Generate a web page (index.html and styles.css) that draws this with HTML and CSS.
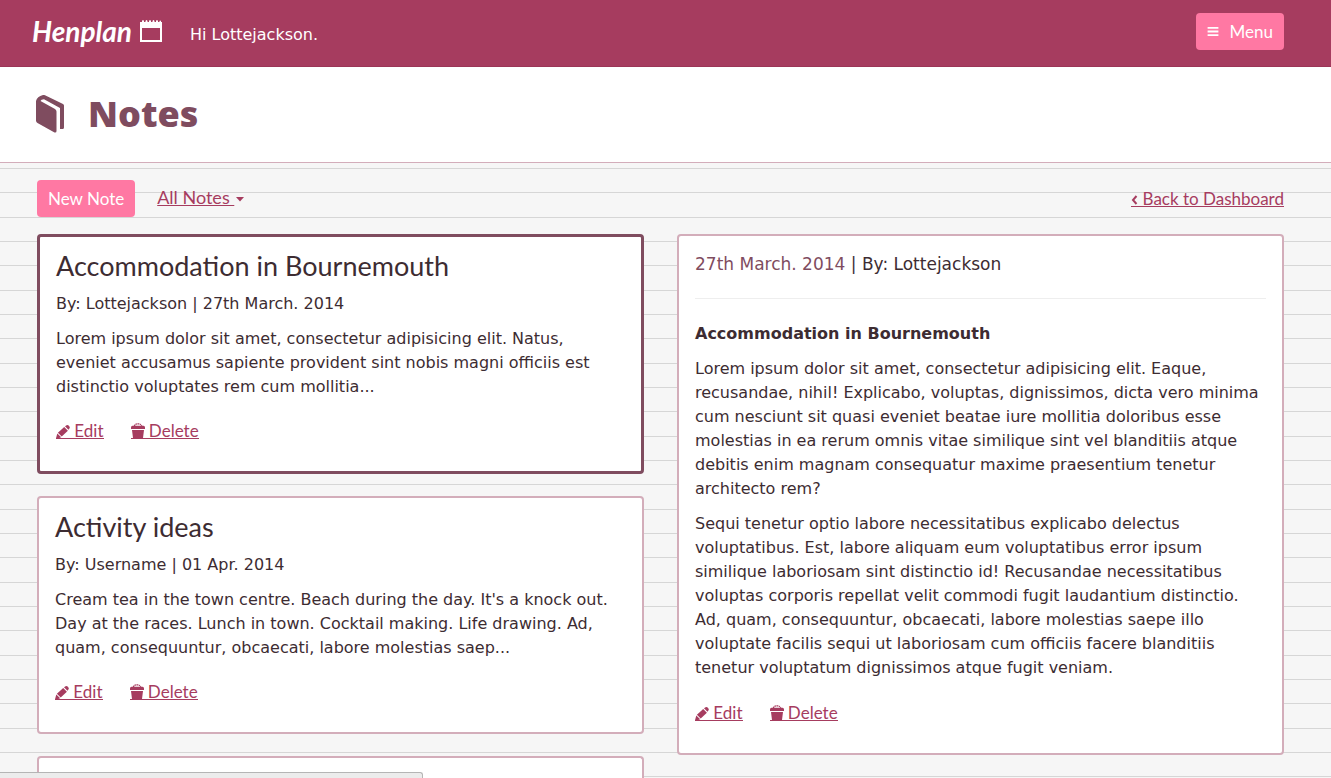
FILE: index.html
```html
<!DOCTYPE html>
<html lang="en">
<head>
<meta charset="utf-8">
<title>Henplan – Notes</title>
<link rel="stylesheet" href="styles.css">
</head>
<body>
<svg class="sprite" aria-hidden="true">
  <symbol id="pencil" viewBox="0 0 14 14"><path d="M9 1.300 10.600.2Q11.800-.3 12.900.8q1.200 1.300.8 2.300l-1.200 1.600zM8.200 2l3.700 3.800-6.200 5.700L1.900 7.700zM1.300 8.500l3.900 3.700L.6 13.900Q-.2 14 0 13.200z"/></symbol>
  <symbol id="bin" viewBox="0 0 14 16"><path d="M3.300 3.200Q4 .8 7 .8t3.700 2.400" fill="none" stroke="currentColor" stroke-width="1.200" stroke-dasharray="1.600 .5"/><path d="M1.500 2.800h11Q14 3 14 4.500V6H0V4.500Q0 3 1.500 2.800zM1 7h12l-1 8q-.1 1-1 1H3q-.9 0-1-1z"/></symbol>
</svg>
<header class="topbar">
  <div class="brand">
    <a class="logo" href="#">Henplan
      <svg class="calendar" viewBox="0 0 22 22" aria-hidden="true"><path fill-rule="evenodd" d="M0 2h2V1q1-2 2 0v1h1.500V1q1-2 2 0v1H9V1q1-2 2 0v1h1.500V1q1-2 2 0v1H16V1q1-2 2 0v1h1.500V1q.8-1 1.500 0v1h1v20H0zM2 8v12h18V8z"/></svg>
    </a>
    <p class="greeting">Hi Lottejackson.</p>
  </div>
  <button class="btn menu" type="button"><svg class="bars" viewBox="0 0 12 10" aria-hidden="true"><path d="M0 0h12v2H0zM0 4h12v2H0zM0 8h12v2H0z"/></svg>Menu</button>
</header>
<div class="title-band">
  <svg class="book" viewBox="0 0 28 38" aria-hidden="true"><path d="M0 6Q1 1.500 7 0q1-.2 2 .3L27 9q1 .5 1 1.500v22q0 1.500-1.500 1.500H24V13L8 4.300Q5 4.500 4.500 6L19 14q1.500 1 1.500 2.500V36q0 2-2 1.500L1.500 28Q0 27 0 25.500z"/></svg>
  <h1>Notes</h1>
</div>
<main class="page">
  <div class="toolbar">
    <button class="btn" type="button">New Note</button>
    <a class="filter" href="#"><span class="filter-label">All Notes&nbsp;</span><svg class="caret" viewBox="0 0 8 5" aria-hidden="true"><path d="M0 0h8L4 4.500z"/></svg></a>
    <a class="back" href="#"><svg class="chevron" viewBox="0 0 7 10" aria-hidden="true"><path d="M5.500 1 2 5l3.500 4" fill="none" stroke="currentColor" stroke-width="2"/></svg> Back to Dashboard</a>
  </div>
  <div class="columns">
    <div class="list">
      <article class="card selected">
        <h2>Accommodation in Bournemouth</h2>
        <p class="meta">By: Lottejackson | 27th March. 2014</p>
        <p>Lorem ipsum dolor sit amet, consectetur adipisicing elit. Natus, eveniet accusamus sapiente provident sint nobis magni officiis est distinctio voluptates rem cum mollitia...</p>
        <div class="actions"><a href="#"><svg class="pencil"><use href="#pencil"/></svg> Edit</a><a href="#"><svg class="bin"><use href="#bin"/></svg> Delete</a></div>
      </article>
      <article class="card">
        <h2>Activity ideas</h2>
        <p class="meta">By: Username | 01 Apr. 2014</p>
        <p>Cream tea in the town centre. Beach during the day. It's a knock out. Day at the races. Lunch in town. Cocktail making. Life drawing. Ad, quam, consequuntur, obcaecati, labore molestias saep...</p>
        <div class="actions"><a href="#"><svg class="pencil"><use href="#pencil"/></svg> Edit</a><a href="#"><svg class="bin"><use href="#bin"/></svg> Delete</a></div>
      </article>
      <article class="card next"></article>
    </div>
    <article class="card detail">
      <p class="detail-meta"><span class="date">27th March. 2014</span> | By: Lottejackson</p>
      <h3>Accommodation in Bournemouth</h3>
      <p>Lorem ipsum dolor sit amet, consectetur adipisicing elit. Eaque, recusandae, nihil! Explicabo, voluptas, dignissimos, dicta vero minima cum nesciunt sit quasi eveniet beatae iure mollitia doloribus esse molestias in ea rerum omnis vitae similique sint vel blanditiis atque debitis enim magnam consequatur maxime praesentium tenetur architecto rem?</p>
      <p>Sequi tenetur optio labore necessitatibus explicabo delectus voluptatibus. Est, labore aliquam eum voluptatibus error ipsum similique laboriosam sint distinctio id! Recusandae necessitatibus voluptas corporis repellat velit commodi fugit laudantium distinctio. Ad, quam, consequuntur, obcaecati, labore molestias saepe illo voluptate facilis sequi ut laboriosam cum officiis facere blanditiis tenetur voluptatum dignissimos atque fugit veniam.</p>
      <div class="actions"><a href="#"><svg class="pencil"><use href="#pencil"/></svg> Edit</a><a href="#"><svg class="bin"><use href="#bin"/></svg> Delete</a></div>
    </article>
  </div>
</main>
<div class="status"></div>
</body>
</html>
```
FILE: styles.css
```css
* { box-sizing: border-box; }
html, body { height: 100%; }
body {
  margin: 0;
  display: flex;
  flex-direction: column;
  background: #f6f6f6;
  color: #3d2c32;
  font: 16px/24px "DejaVu Sans", Verdana, sans-serif;
}
h1, h2, h3, p { margin: 0; }
svg { fill: currentColor; }
a { color: #a63c5f; }
.sprite { position: absolute; width: 0; height: 0; }

.topbar {
  flex: none;
  display: flex;
  justify-content: space-between;
  align-items: flex-start;
  height: 67px;
  padding: 13px 47px 0 32px;
  background: #a63c5f;
  border-bottom: 1px solid #9b3557;
  color: #fff;
}
.brand { display: flex; align-items: center; gap: 28px; }
.logo {
  display: flex;
  align-items: center;
  gap: 8px;
  color: #fff;
  font: italic 700 28px/36px Lato, sans-serif;
  text-decoration: none;
}
.calendar { width: 22px; height: 22px; }
.greeting { padding-top: 8px; }

.btn {
  height: 37px;
  padding: 0 11px;
  border: 0;
  border-radius: 4px;
  background: #ff78a3;
  color: #fff;
  font: 17px/24px Lato, sans-serif;
}
.menu { display: flex; align-items: center; gap: 11px; }
.bars { width: 12px; height: 9px; }

.title-band {
  flex: none;
  display: flex;
  align-items: center;
  gap: 24px;
  height: 96px;
  padding: 0 37px 2px 36px;
  background: #fff;
  border-bottom: 1px solid #d3adba;
  color: #7f4c5f;
}
.book { width: 28px; height: 38px; }
h1 { font: 800 36px/48px "Open Sans", Lato, sans-serif; }

.page {
  flex: 1;
  padding: 17px 47px 0 37px;
  background: linear-gradient(#d6d6d6 0 1px, #f6f6f6 1px 24px, #d6d6d6 24px 25px, #f6f6f6 25px 49px, #d6d6d6 49px 50px, #f6f6f6 50px) 0 5px / 100% 73px;
}
.toolbar { display: flex; align-items: center; margin-bottom: 17px; font: 17px/24px Lato, sans-serif; }
.filter { display: flex; align-items: center; margin-left: 22px; padding-bottom: 3px; font-size: 18px; text-decoration: none; }
.filter-label { text-decoration: underline; }
.caret { width: 8px; height: 5px; margin: 5px 0 0 2px; }
.back, .actions a {
  text-decoration: none;
  background: linear-gradient(currentColor, currentColor) 0 19px / 100% 1px no-repeat;
}
.back { margin-left: auto; }
.chevron { width: 7px; height: 10px; }

.columns { display: grid; grid-template-columns: 1fr 1fr; gap: 33px; align-items: start; }
.list { display: grid; gap: 22px; }
.card {
  padding: 14px 16px 28px;
  background: #fff;
  border: 2px solid #d3adba;
  border-radius: 4px;
}
.selected { border: 3px solid #7f4c5f; }
.next { height: 22px; padding: 0; border-bottom: 0; border-radius: 4px 4px 0 0; }
h2 { font: 27px/30px Lato, sans-serif; }
.meta { margin: 11px 0; }
.actions { display: flex; gap: 27px; margin-top: 20px; font: 17px/24px Lato, sans-serif; }
.pencil { width: 14px; height: 14px; vertical-align: -2px; }
.bin { width: 14px; height: 16px; vertical-align: -2px; }
.detail .actions { margin-top: 21px; }
.detail { padding: 16px 16px 28px; }
.detail-meta { padding-bottom: 22px; border-bottom: 1px solid #eee; font-size: 17px; }
.date { color: #7f4c5f; }
h3 { margin: 23px 0 11px; font-size: 16px; line-height: 24px; }
.detail p + p { margin-top: 11px; }

.status {
  position: fixed;
  left: 0;
  bottom: 0;
  width: 423px;
  height: 6px;
  background: #ececec;
  border: 1px solid #b5b5b5;
  border-width: 1px 1px 0 0;
  border-top-right-radius: 3px;
}
```
